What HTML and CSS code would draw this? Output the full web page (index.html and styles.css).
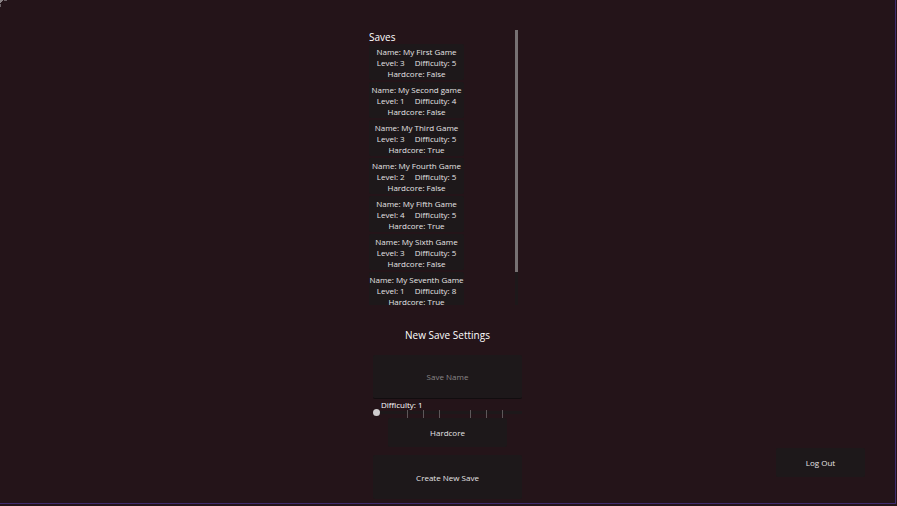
FILE: index.html
```html
<!DOCTYPE html>
<html lang="en">
<head>
<meta charset="utf-8">
<title>Saves</title>
<meta name="viewport" content="width=device-width, initial-scale=1">
<link rel="stylesheet" href="styles.css">
</head>
<body>
<div class="screen">
  <svg class="corner" width="8" height="8" aria-hidden="true"><path d="M0 0h3v1H2v1H1v1H0z" fill="#8b8386"/><path d="M4 0h3v1H4zM0 4h1v3H0z" fill="#6c6266"/></svg>
  <main class="menu">
    <section class="saves">
      <div class="saves-list">
        <h2 class="saves-title">Saves</h2>
        <button class="save" type="button"><span>Name: My First Game</span><span class="stats"><span>Level: 3</span><span>Difficulty: 5</span></span><span>Hardcore: False</span></button>
        <button class="save" type="button"><span>Name: My Second game</span><span class="stats"><span>Level: 1</span><span>Difficulty: 4</span></span><span>Hardcore: False</span></button>
        <button class="save" type="button"><span>Name: My Third Game</span><span class="stats"><span>Level: 3</span><span>Difficulty: 5</span></span><span>Hardcore: True</span></button>
        <button class="save" type="button"><span>Name: My Fourth Game</span><span class="stats"><span>Level: 2</span><span>Difficulty: 5</span></span><span>Hardcore: False</span></button>
        <button class="save" type="button"><span>Name: My Fifth Game</span><span class="stats"><span>Level: 4</span><span>Difficulty: 5</span></span><span>Hardcore: True</span></button>
        <button class="save" type="button"><span>Name: My Sixth Game</span><span class="stats"><span>Level: 3</span><span>Difficulty: 5</span></span><span>Hardcore: False</span></button>
        <button class="save" type="button"><span>Name: My Seventh Game</span><span class="stats"><span>Level: 1</span><span>Difficulty: 8</span></span><span>Hardcore: True</span></button>
      </div>
      <div class="scrollbar"><div class="thumb"></div></div>
    </section>
    <form class="settings">
      <h2 class="settings-title">New Save Settings</h2>
      <input class="name" type="text" placeholder="Save Name" aria-label="Save Name">
      <div class="difficulty">
        <label class="difficulty-label" for="difficulty">Difficulty: 1</label>
        <input class="slider" id="difficulty" type="range" min="1" max="10" value="1">
        <svg class="ticks" viewBox="0 0 149 8" aria-hidden="true"><path d="M34 0h1v8h-1zM50 0h1v8h-1zM66 0h1v8h-1zM97 0h1v8h-1zM113 0h1v8h-1zM129 0h1v8h-1z" fill="#5d5759"/></svg>
      </div>
      <button class="hardcore" type="button">Hardcore</button>
      <button class="create" type="button">Create New Save</button>
    </form>
  </main>
  <button class="logout" type="button">Log Out</button>
</div>
</body>
</html>
```
FILE: styles.css
```css
* {
  box-sizing: border-box;
}

body {
  margin: 0;
  background: #241419;
  color: #e6e4e5;
  font: 500 8px/11px "Open Sans", sans-serif;
}

button,
input {
  margin: 0;
  padding: 0;
  border: 0;
  border-radius: 2px;
  background: #1d181a;
  color: inherit;
  font: inherit;
  text-align: center;
}

h2 {
  margin: 0;
  color: #fff;
  font-size: 10px;
  font-weight: 500;
  line-height: 14px;
}

.screen {
  position: relative;
  min-height: calc(100vh - 2px);
  margin-right: 1px;
  padding-top: 30px;
  border: solid #402c70;
  border-width: 0 1px 1px 0;
}

.corner {
  position: absolute;
  top: 0;
  left: 0;
}

.menu {
  display: flex;
  flex-direction: column;
  align-items: center;
}

.saves {
  display: flex;
  justify-content: space-between;
  width: 157px;
  height: 275px;
  padding-right: 8px;
  overflow: hidden;
}

.saves-list {
  display: flex;
  flex-direction: column;
  gap: 2px;
  width: 95px;
}

.saves-title {
  margin-bottom: -2px;
}

.save {
  display: flex;
  flex: none;
  flex-direction: column;
  align-items: center;
  justify-content: center;
  height: 36px;
  white-space: nowrap;
}

.stats {
  display: flex;
  gap: 10px;
}

.scrollbar {
  width: 3px;
  background: #1d181a;
}

.thumb {
  height: 88%;
  background: #777173;
}

.settings {
  display: flex;
  flex-direction: column;
  align-items: center;
  width: 149px;
  padding-top: 23px;
}

.settings-title {
  margin-bottom: 13px;
}

.name {
  width: 100%;
  height: 44px;
  border-bottom: 1px solid #110d0f;
}

.name::placeholder {
  color: #8a8687;
  opacity: 1;
}

.difficulty {
  position: relative;
  width: 100%;
  height: 19px;
}

.difficulty-label {
  display: block;
  padding-left: 8px;
  color: #fff;
}

.ticks {
  position: absolute;
  bottom: 0;
  left: 0;
  width: 100%;
  height: 8px;
  pointer-events: none;
}

.slider {
  position: absolute;
  bottom: 2px;
  left: 0;
  width: 100%;
  height: 7px;
  background: none;
  appearance: none;
}

.slider::-webkit-slider-runnable-track {
  height: 7px;
  background: linear-gradient(#1d181a, #1d181a) center / 100% 3px no-repeat;
}

.slider::-webkit-slider-thumb {
  width: 7px;
  height: 7px;
  border-radius: 50%;
  background: #cfcccd;
  appearance: none;
}

.hardcore {
  width: 119px;
  height: 29px;
}

.create {
  width: 100%;
  height: 44px;
  margin-top: 8px;
}

.logout {
  position: absolute;
  right: 30px;
  bottom: 26px;
  width: 89px;
  height: 29px;
}
```
